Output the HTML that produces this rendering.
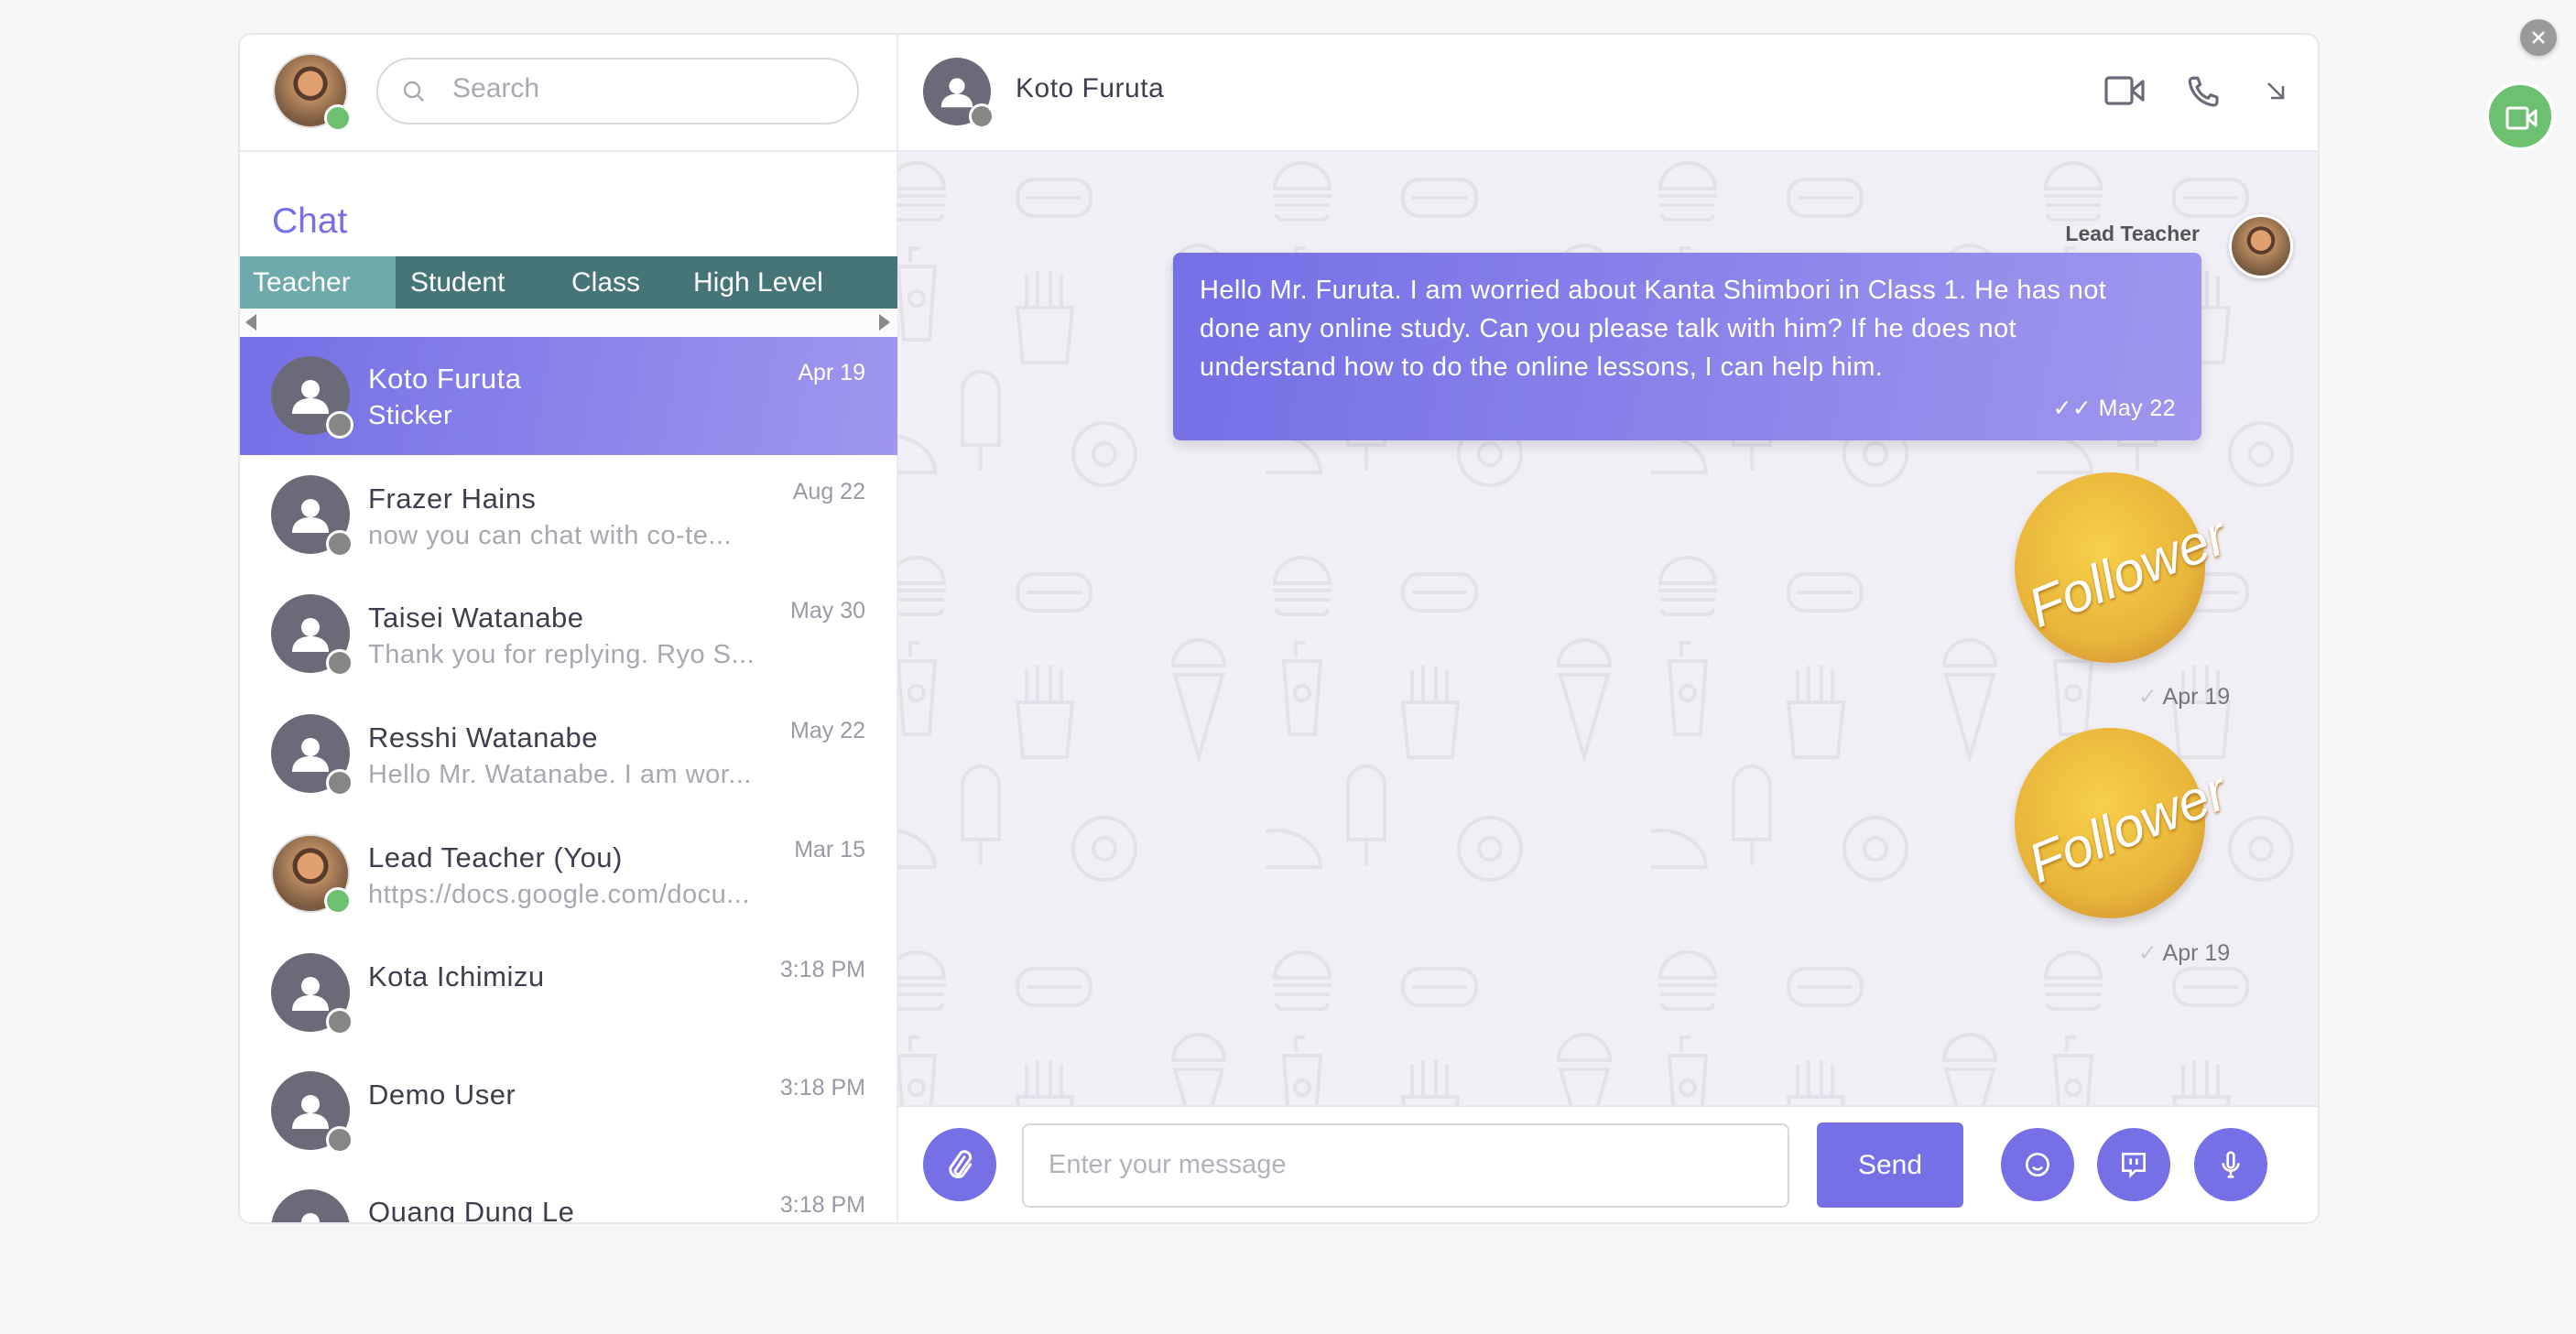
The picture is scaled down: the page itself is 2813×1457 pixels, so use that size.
<!DOCTYPE html>
<html><head><meta charset="utf-8"><style>
*{margin:0;padding:0;box-sizing:border-box}
body{width:2813px;height:1457px;background:#f7f7f7;font-family:"Liberation Sans",sans-serif;position:relative;overflow:hidden}
.abs{position:absolute}
.panel{left:260px;top:36px;width:2273px;height:1301px;background:#fff;border:2px solid #e8e7ee;border-radius:14px;overflow:hidden}
.av{position:absolute;width:86px;height:86px;border-radius:50%;background:#6b6a78}
.av svg{position:absolute;left:0;top:0}
.dot{position:absolute;width:30px;height:30px;border-radius:50%;background:#868686;border:3px solid #fff;right:-4px;bottom:-4px}
.dot.g{background:#6cc070}
.nm{position:absolute;left:402px;font-size:31px;color:#3f3e4e;letter-spacing:0.5px}
.sb{position:absolute;left:402px;font-size:29px;color:#a8a7b2;white-space:nowrap;letter-spacing:0.5px}
.dt{position:absolute;left:745px;font-size:25px;color:#9a99a6;text-align:right;width:200px}
.tab{position:absolute;top:0;height:57px;line-height:57px;font-size:30px;color:#fff}
.cb{position:absolute;width:80px;height:80px;border-radius:50%;background:#7670e6}
.cb svg{position:absolute;left:20px;top:20px}
</style></head><body>
<div class="abs panel"></div>
<div class="abs" style="left:262px;top:164px;width:2269px;height:2px;background:#eceaf0"></div>
<div class="abs" style="left:979px;top:38px;width:2px;height:1297px;background:#eceaf0"></div>
<div class="av" style="left:298px;top:58px;width:82px;height:82px;background:radial-gradient(circle at 50% 40%,#e0a070 0 22%,#5a3a2a 23% 30%,#b88a60 31%,#7a5a40 70%);border:2px solid #ddd"><div class="dot g" style="right:-6px;bottom:-6px"></div></div>
<div class="abs" style="left:411px;top:63px;width:527px;height:73px;border:2px solid #d9d8df;border-radius:37px"></div>
<svg class="abs" style="left:440px;top:88px" width="24" height="24" viewBox="0 0 24 24" fill="none" stroke="#a9a8b3" stroke-width="2.4"><circle cx="10" cy="10" r="8"/><path d="M16 16l6 6"/></svg>
<div class="abs" style="left:494px;top:80px;font-size:30px;color:#a9a8b3">Search</div>
<div class="abs" style="left:297px;top:220px;font-size:39px;color:#7670e6">Chat</div>
<div class="abs" style="left:262px;top:280px;width:718px;height:57px;background:#457577"></div>
<div class="abs" style="left:262px;top:280px;width:170px;height:57px;background:#6ea9ac"></div>
<div class="tab" style="left:276px;top:280px">Teacher</div>
<div class="tab" style="left:448px;top:280px">Student</div>
<div class="tab" style="left:624px;top:280px">Class</div>
<div class="tab" style="left:757px;top:280px">High Level</div>
<div class="abs" style="left:262px;top:337px;width:718px;height:31px;background:#fbfbfb"></div>
<div class="abs" style="left:268px;top:343px;width:0;height:0;border-top:9px solid transparent;border-bottom:9px solid transparent;border-right:12px solid #888"></div>
<div class="abs" style="left:960px;top:343px;width:0;height:0;border-top:9px solid transparent;border-bottom:9px solid transparent;border-left:12px solid #888"></div>
<div class="abs" style="left:262px;top:368px;width:718px;height:129px;background:linear-gradient(100deg,#7470e6,#9e97ee)"></div>

<svg width="0" height="0" style="position:absolute"><defs><g id="person"><circle cx="43" cy="36" r="10" fill="#fff"/><path d="M23 63c0-12 9-17 20-17s20 5 20 17z" fill="#fff"/></g></defs></svg>

<div class="av" style="left:296px;top:389px"><svg width="86" height="86"><use href="#person"/></svg><div class="dot"></div></div>
<div class="nm" style="top:396px;color:#fff">Koto Furuta</div>
<div class="sb" style="top:438px;color:#fff">Sticker</div>
<div class="dt" style="top:393px;color:#fff">Apr 19</div>

<div class="av" style="left:296px;top:519px"><svg width="86" height="86"><use href="#person"/></svg><div class="dot"></div></div>
<div class="nm" style="top:527px">Frazer Hains</div>
<div class="sb" style="top:569px">now you can chat with co-te...</div>
<div class="dt" style="top:523px">Aug 22</div>

<div class="av" style="left:296px;top:649px"><svg width="86" height="86"><use href="#person"/></svg><div class="dot"></div></div>
<div class="nm" style="top:657px">Taisei Watanabe</div>
<div class="sb" style="top:699px">Thank you for replying. Ryo S...</div>
<div class="dt" style="top:653px">May 30</div>

<div class="av" style="left:296px;top:780px"><svg width="86" height="86"><use href="#person"/></svg><div class="dot"></div></div>
<div class="nm" style="top:788px">Resshi Watanabe</div>
<div class="sb" style="top:830px">Hello Mr. Watanabe. I am wor...</div>
<div class="dt" style="top:784px">May 22</div>

<div class="av" style="left:296px;top:911px;background:radial-gradient(circle at 50% 40%,#e0a070 0 22%,#5a3a2a 23% 30%,#b88a60 31%,#7a5a40 70%);border:2px solid #ddd"><div class="dot g"></div></div>
<div class="nm" style="top:919px">Lead Teacher (You)</div>
<div class="sb" style="top:961px">https://docs.google.com/docu...</div>
<div class="dt" style="top:914px">Mar 15</div>

<div class="av" style="left:296px;top:1041px"><svg width="86" height="86"><use href="#person"/></svg><div class="dot"></div></div>
<div class="nm" style="top:1049px">Kota Ichimizu</div>
<div class="dt" style="top:1045px">3:18 PM</div>

<div class="av" style="left:296px;top:1170px"><svg width="86" height="86"><use href="#person"/></svg><div class="dot"></div></div>
<div class="nm" style="top:1178px">Demo User</div>
<div class="dt" style="top:1174px">3:18 PM</div>

<div class="abs" style="left:262px;top:1280px;width:716px;height:55px;overflow:hidden">
<div class="av" style="left:34px;top:19px"><svg width="86" height="86"><use href="#person"/></svg></div>
<div class="nm" style="left:140px;top:26px">Quang Dung Le</div>
<div class="dt" style="left:483px;top:22px">3:18 PM</div>
</div>

<div class="av" style="left:1008px;top:63px;width:74px;height:74px"><svg width="74" height="74" viewBox="0 0 86 86"><use href="#person"/></svg><div class="dot" style="width:28px;height:28px"></div></div>
<div class="abs" style="left:1109px;top:80px;font-size:30px;color:#3f3e4e;letter-spacing:0.5px">Koto Furuta</div>
<svg class="abs" style="left:2298px;top:80px" width="46" height="38" viewBox="0 0 46 38" fill="none" stroke="#6b6a78" stroke-width="3.2" stroke-linejoin="round"><rect x="2" y="5" width="28" height="28" rx="3"/><path d="M30 19l12-10v20z"/></svg>
<svg class="abs" style="left:2386px;top:80px" width="42" height="42" viewBox="0 0 24 24" fill="none" stroke="#6b6a78" stroke-width="1.8" stroke-linejoin="round"><path d="M5 3h3l1.5 4-2 1.5a11 11 0 0 0 7 7l1.5-2 4 1.5v3a2 2 0 0 1-2 2A17 17 0 0 1 3 5a2 2 0 0 1 2-2z"/></svg>
<svg class="abs" style="left:2474px;top:88px" width="22" height="22" viewBox="0 0 22 22" fill="none" stroke="#6b6a78" stroke-width="2.6"><path d="M3 3l15 15M6 19h13V6"/></svg>
<div class="abs" style="left:981px;top:166px;width:1550px;height:1041px;background:#f0eff5;overflow:hidden">
<svg width="1550" height="1041"><defs><pattern id="p" x="-20" y="0" width="421" height="431" patternUnits="userSpaceOnUse"><g fill="none" stroke="#e3e1ea" stroke-width="4">
<path d="M10 40a30 28 0 0 1 60 0zM8 48h64M10 58h60M12 68a6 6 0 0 0 6 6h44a6 6 0 0 0 6-6"/>
<rect x="150" y="30" width="80" height="40" rx="18"/><path d="M160 50h60"/>
<path d="M33 120v-15h10M20 125h40l-6 80H26z"/><circle cx="40" cy="160" r="8"/>
<path d="M150 170h60l-6 60h-48zM160 170v-35M172 170v-40M186 170v-40M198 170v-35"/>
<path d="M90 260a20 20 0 0 1 40 0v60h-40zM110 320v28"/>
<circle cx="245" cy="330" r="34"/><circle cx="245" cy="330" r="12"/>
<path d="M-40 350a50 40 0 0 1 100 0z"/>
<path d="M320 130a28 28 0 0 1 56 0zM322 140l26 90 26-90z"/>
</g></pattern></defs><rect width="1550" height="1041" fill="url(#p)"/></svg>
</div>
<div class="abs" style="left:2200px;top:242px;width:202px;text-align:right;font-size:23px;color:#555;font-weight:bold">Lead Teacher</div>
<div class="abs" style="left:2434px;top:234px;width:70px;height:70px;border-radius:50%;border:3px solid #fff;background:radial-gradient(circle at 50% 40%,#e0a070 0 22%,#5a3a2a 23% 30%,#b88a60 31%,#7a5a40 70%);box-shadow:0 2px 6px rgba(0,0,0,.2)"></div>
<div class="abs" style="left:1281px;top:276px;width:1123px;height:205px;border-radius:8px;background:linear-gradient(100deg,#7470e6,#9e97ee);box-shadow:0 6px 14px rgba(0,0,0,.12);color:#fff;font-size:29px;line-height:42px;padding:20px 29px;white-space:nowrap;letter-spacing:0.4px">Hello Mr. Furuta. I am worried about Kanta Shimbori in Class 1. He has not<br>done any online study. Can you please talk with him? If he does not<br>understand how to do the online lessons, I can help him.
<div style="position:absolute;right:28px;bottom:20px;font-size:25px;line-height:30px">✓✓ May 22</div></div>
<div class="abs" style="left:2200px;top:516px;width:208px;height:208px;border-radius:50%;background:radial-gradient(circle at 45% 40%,#f7d04a,#e8b53a 60%,#d69a35 80%,#f2cf88 82%,#e3b062);box-shadow:0 6px 10px rgba(0,0,0,.15)"><div style="position:absolute;left:10px;top:74px;font-size:60px;color:#fff;font-style:italic;transform:rotate(-22deg);text-shadow:0 2px 3px #b07820">Follower</div></div>
<div class="abs" style="left:2335px;top:746px;font-size:25px;color:#777"><span style="color:#ccc">✓</span> Apr 19</div>
<div class="abs" style="left:2200px;top:795px;width:208px;height:208px;border-radius:50%;background:radial-gradient(circle at 45% 40%,#f7d04a,#e8b53a 60%,#d69a35 80%,#f2cf88 82%,#e3b062);box-shadow:0 6px 10px rgba(0,0,0,.15)"><div style="position:absolute;left:10px;top:74px;font-size:60px;color:#fff;font-style:italic;transform:rotate(-22deg);text-shadow:0 2px 3px #b07820">Follower</div></div>
<div class="abs" style="left:2335px;top:1026px;font-size:25px;color:#777"><span style="color:#ccc">✓</span> Apr 19</div>
<div class="abs" style="left:981px;top:1207px;width:1550px;height:2px;background:#e8e7ee"></div>
<div class="cb" style="left:1008px;top:1232px"><svg width="40" height="40" viewBox="0 0 24 24" fill="none" stroke="#fff" stroke-width="1.8" stroke-linecap="round"><path d="M15 7l-6 9a2 2 0 0 0 3 2l7-10a4 4 0 0 0-6-4L6 14a5 5 0 0 0 8 5l5-7"/></svg></div>
<div class="abs" style="left:1116px;top:1227px;width:838px;height:92px;border:2px solid #d8d7de;border-radius:8px"></div>
<div class="abs" style="left:1145px;top:1256px;font-size:29px;color:#b3b2bc">Enter your message</div>
<div class="abs" style="left:1984px;top:1226px;width:160px;height:93px;border-radius:6px;background:#7670e6;color:#fff;font-size:30px;line-height:93px;text-align:center">Send</div>
<div class="cb" style="left:2185px;top:1232px"><svg width="40" height="40" viewBox="0 0 24 24" fill="none" stroke="#fff" stroke-width="1.6"><circle cx="12" cy="12" r="7"/><path d="M9 13.5a3.5 3.5 0 0 0 6 0M10 10h.01M14 10h.01"/></svg></div>
<div class="cb" style="left:2290px;top:1232px"><svg width="40" height="40" viewBox="0 0 24 24" fill="none" stroke="#fff" stroke-width="1.6"><path d="M5 5h14v11h-6l-3 3v-3H5zM10 8v4M14 8v4"/></svg></div>
<div class="cb" style="left:2396px;top:1232px"><svg width="40" height="40" viewBox="0 0 24 24" fill="none" stroke="#fff" stroke-width="1.6"><rect x="10" y="4" width="4" height="10" rx="2"/><path d="M7 11a5 5 0 0 0 10 0M12 16v4M10 20h4"/></svg></div>
<div class="abs" style="left:2752px;top:21px;width:40px;height:40px;border-radius:50%;background:#9a9a9a;box-shadow:0 2px 6px rgba(0,0,0,.2)"><svg width="40" height="40"><path d="M14 14l12 12M26 14l-12 12" stroke="#fff" stroke-width="2.6"/></svg></div>
<div class="abs" style="left:2714px;top:89px;width:76px;height:76px;border-radius:50%;background:#6cc070;border:4px solid #fff"><svg width="68" height="68" viewBox="0 0 68 68" fill="none" stroke="#fff" stroke-width="3" stroke-linejoin="round"><rect x="20" y="25" width="22" height="22" rx="2"/><path d="M42 36l9-8v16z"/></svg></div>
</body></html>
